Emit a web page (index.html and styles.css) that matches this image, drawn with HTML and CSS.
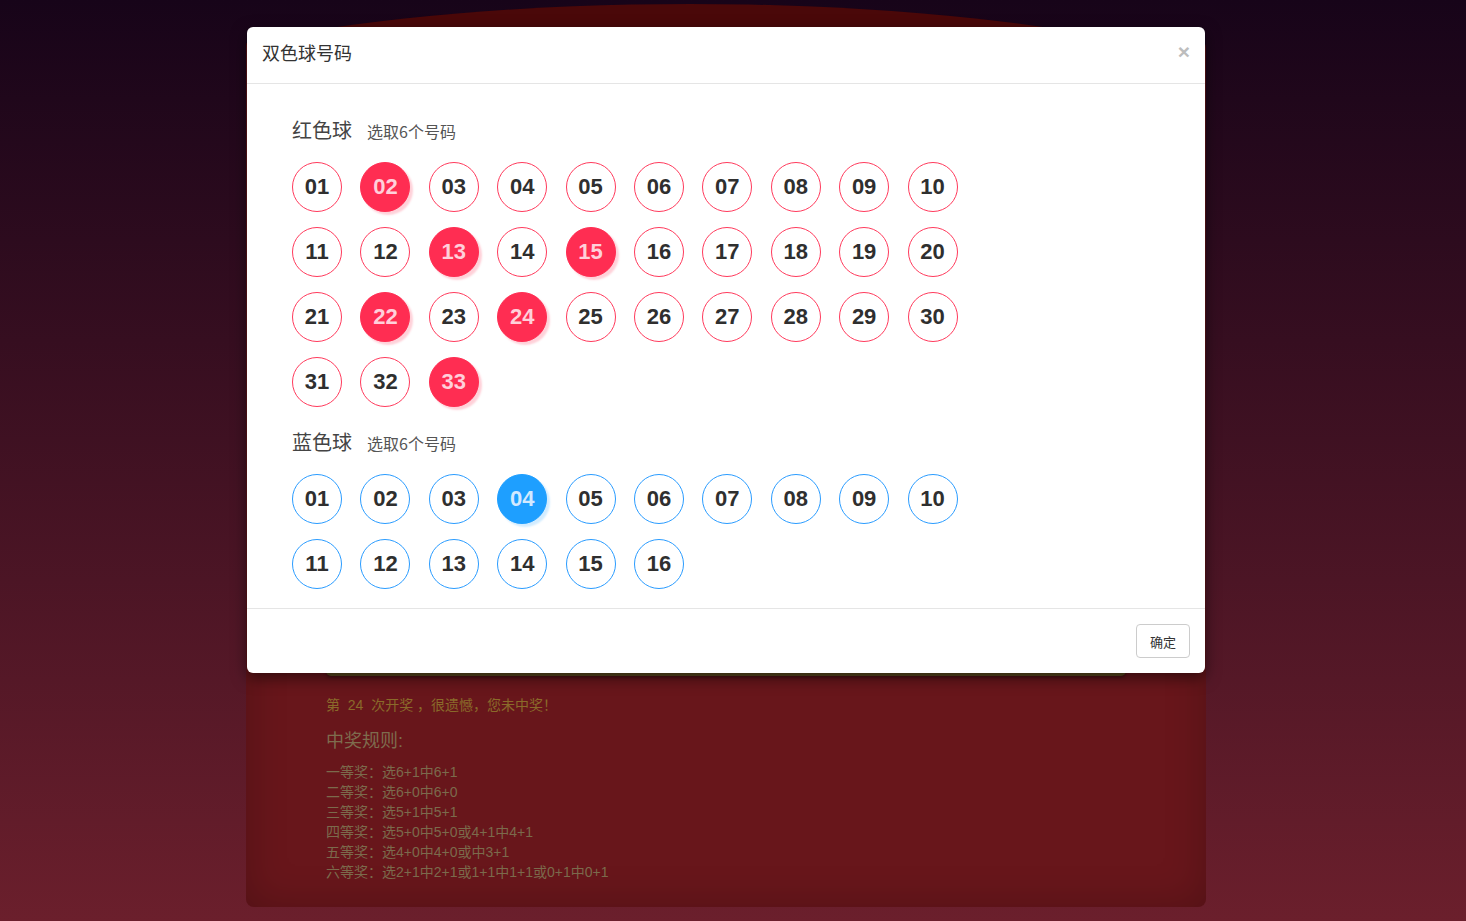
FILE: index.html
```html
<!DOCTYPE html>
<html lang="zh-CN">
<head>
<meta charset="utf-8">
<title>双色球</title>
<link rel="stylesheet" href="styles.css">
</head>
<body>
<div class="page">
  <div class="arc"></div>
  <div class="board">
    <div class="board-hidden"></div>
    <div class="goldbar"></div>
    <div class="result">
      <p class="notice">第&nbsp; 24&nbsp; 次开奖 ，很遗憾，您未中奖！</p>
      <h4 class="rules-title">中奖规则:</h4>
      <ul class="rules">
        <li>一等奖：选6+1中6+1</li>
        <li>二等奖：选6+0中6+0</li>
        <li>三等奖：选5+1中5+1</li>
        <li>四等奖：选5+0中5+0或4+1中4+1</li>
        <li>五等奖：选4+0中4+0或中3+1</li>
        <li>六等奖：选2+1中2+1或1+1中1+1或0+1中0+1</li>
      </ul>
    </div>
  </div>
</div>

<div class="modal">
  <div class="modal-header">
    <h3 class="modal-title">双色球号码</h3>
    <span class="close">×</span>
  </div>
  <div class="modal-body">
    <div class="group-title"><span class="group-name">红色球</span><span class="group-hint">选取6个号码</span></div>
    <div class="balls red">
      <span class="ball">01</span><span class="ball on">02</span><span class="ball">03</span><span class="ball">04</span><span class="ball">05</span><span class="ball">06</span><span class="ball">07</span><span class="ball">08</span><span class="ball">09</span><span class="ball">10</span>
      <span class="ball">11</span><span class="ball">12</span><span class="ball on">13</span><span class="ball">14</span><span class="ball on">15</span><span class="ball">16</span><span class="ball">17</span><span class="ball">18</span><span class="ball">19</span><span class="ball">20</span>
      <span class="ball">21</span><span class="ball on">22</span><span class="ball">23</span><span class="ball on">24</span><span class="ball">25</span><span class="ball">26</span><span class="ball">27</span><span class="ball">28</span><span class="ball">29</span><span class="ball">30</span>
      <span class="ball">31</span><span class="ball">32</span><span class="ball on">33</span>
    </div>
    <div class="group-title blue-title"><span class="group-name">蓝色球</span><span class="group-hint">选取6个号码</span></div>
    <div class="balls blue">
      <span class="ball">01</span><span class="ball">02</span><span class="ball">03</span><span class="ball on">04</span><span class="ball">05</span><span class="ball">06</span><span class="ball">07</span><span class="ball">08</span><span class="ball">09</span><span class="ball">10</span>
      <span class="ball">11</span><span class="ball">12</span><span class="ball">13</span><span class="ball">14</span><span class="ball">15</span><span class="ball">16</span>
    </div>
  </div>
  <div class="modal-footer">
    <button class="btn">确定</button>
  </div>
</div>
</body>
</html>
```

FILE: styles.css
```css
* { box-sizing: border-box; }
html, body { height: 100%; }
body {
  margin: 0;
  min-height: 921px;
  font-family: "Liberation Sans", "Noto Sans CJK SC", sans-serif;
  font-size: 14px;
  line-height: 20px;
  color: #333;
  background: linear-gradient(to bottom, #170419 0%, #6b1f2c 100%);
  overflow: hidden;
}

.page {
  position: relative;
  width: 960px;
  margin-left: 246px;
  padding-top: 40px;
  overflow: hidden;
}

.arc {
  position: absolute;
  top: 4px;
  left: -156px;
  width: 1200px;
  height: 240px;
  border-radius: 50%;
  background: #4a0809;
}

.board {
  position: relative;
  height: 867px;
  background: #68161b;
  border-radius: 8px;
  box-shadow: inset 0 0 40px rgba(0, 0, 0, 0.22);
  display: flex;
  flex-direction: column;
}
.board-hidden { height: 576px; }
.goldbar {
  height: 60px;
  margin: 0 80px;
  background: #5b4a1f;
  border-radius: 0 0 5px 5px;
  box-shadow: 0 2px 3px rgba(0, 0, 0, 0.3);
}
.result { padding: 19px 80px 0; }
.notice {
  margin: 0;
  color: #8a6a2a;
  font-size: 14px;
  line-height: 20px;
}
.rules-title {
  margin: 16px 0 11px;
  font-size: 18px;
  line-height: 20px;
  font-weight: normal;
  color: #7e6c4e;
}
.rules {
  list-style: none;
  margin: 0;
  padding: 0;
  color: #7b6a4c;
  font-size: 14px;
  line-height: 20px;
}

/* modal */
.modal {
  position: absolute;
  top: 27px;
  left: 247px;
  width: 958px;
  background: #fff;
  border-radius: 6px;
  box-shadow: 0 5px 15px rgba(0, 0, 0, 0.5);
}
.modal-header {
  display: flex;
  align-items: flex-start;
  justify-content: space-between;
  height: 57px;
  padding: 13px 15px 0;
  border-bottom: 1px solid #e5e5e5;
}
.modal-title {
  margin: 0;
  font-size: 18px;
  line-height: 25px;
  font-weight: normal;
  color: #333;
  font-family: "Noto Sans CJK SC", sans-serif;
}
.close {
  font-size: 21px;
  font-weight: bold;
  color: #bdbdbd;
  line-height: 21px;
  margin-top: 1px;
}
.modal-body { padding: 35px 45px 19px; }
.group-title {
  display: flex;
  align-items: baseline;
  height: 22px;
  line-height: 22px;
  margin-bottom: 21px;
  font-family: "Noto Sans CJK SC", sans-serif;
}
.blue-title { margin-top: 24px; }
.group-name { font-size: 20px; color: #444; }
.group-hint { font-size: 16px; color: #555; margin-left: 15px; }

.balls {
  display: grid;
  grid-template-columns: repeat(10, 50px);
  column-gap: 18.4px;
  row-gap: 15px;
}
.ball {
  width: 50px;
  height: 50px;
  border-radius: 50%;
  border: 1px solid #ff3a5c;
  display: flex;
  align-items: center;
  justify-content: center;
  font-family: "Liberation Sans", Arial, sans-serif;
  font-weight: bold;
  font-size: 22px;
  color: #2f2f2f;
  background: #fff;
}
.blue .ball { border-color: #2a9cff; }
.red .ball.on {
  background: #ff2d52;
  border-color: #ff2d52;
  color: #ffd0da;
  box-shadow: 3px 3px 2px rgba(255, 45, 82, 0.22);
}
.blue .ball.on {
  background: #1e9fff;
  border-color: #1e9fff;
  color: #d2e9ff;
  box-shadow: 3px 3px 2px rgba(30, 159, 255, 0.2);
}

.modal-footer {
  display: flex;
  justify-content: flex-end;
  padding: 15px;
  border-top: 1px solid #e5e5e5;
}
.btn {
  width: 54px;
  height: 34px;
  border: 1px solid #ccc;
  border-radius: 4px;
  background: #fff;
  color: #333;
  font-size: 13px;
  font-family: "Noto Sans CJK SC", sans-serif;
  padding: 0;
}
```
